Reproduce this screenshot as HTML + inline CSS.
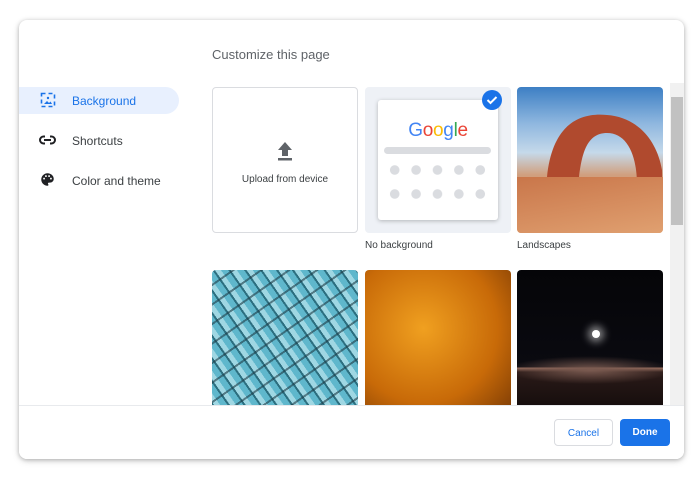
<!DOCTYPE html>
<html><head><style>
*{margin:0;padding:0;box-sizing:border-box}
body{width:700px;height:481px;background:#fff;font-family:"Liberation Sans",sans-serif;position:relative;overflow:hidden}
.dlg{position:absolute;left:19px;top:20px;width:665px;height:439px;border-radius:8px;background:#fff;box-shadow:0 1px 4px rgba(0,0,0,.25),0 2px 8px rgba(0,0,0,.12);overflow:hidden}
.t{position:absolute;font-size:13px;color:#5f6368}
.nav{position:absolute;left:0;width:160px;height:27px;font-size:12px;color:#3c4043}
.nav span{position:absolute;left:53px;top:7px}
.sel{background:#e8f0fe;border-radius:0 14px 14px 0;color:#1a73e8}
.sel span{color:#1a73e8}
.tile{position:absolute;width:146px;height:146px;border-radius:4px;overflow:hidden}
.lab{position:absolute;font-size:10px;color:#3c4043}
.btn{position:absolute;top:399px;height:27px;border-radius:4px;font-size:10px;font-weight:bold;text-align:center;line-height:27px}
</style></head><body>
<div class="dlg">
<div class="t" style="left:193px;top:27px">Customize this page</div>
<div class="nav sel" style="top:67px">
<svg style="position:absolute;left:21px;top:5px" width="16" height="16" viewBox="0 0 16 16"><rect x="1.5" y="1.5" width="13" height="13" fill="none" stroke="#1a73e8" stroke-width="1.6" stroke-dasharray="4 3"/><path d="M4 12l3-3 2 2 1.5-1.5L12 12z" fill="#1a73e8"/><circle cx="8" cy="6" r="1.2" fill="#1a73e8"/></svg>
<span>Background</span></div>
<div class="nav" style="top:107px">
<svg style="position:absolute;left:20px;top:8px" width="17" height="10" viewBox="0 0 17 10"><path d="M6 1.5H4.5a3.5 3.5 0 000 7H6M11 1.5h1.5a3.5 3.5 0 010 7H11M5 5h7" fill="none" stroke="#202124" stroke-width="2"/></svg>
<span>Shortcuts</span></div>
<div class="nav" style="top:147px">
<svg style="position:absolute;left:21px;top:5px" width="15" height="15" viewBox="0 0 24 24"><path d="M12 2C6.5 2 2 6.5 2 12s4.5 10 10 10c.9 0 1.5-.7 1.5-1.5 0-.4-.1-.7-.4-1-.2-.3-.4-.6-.4-1 0-.8.7-1.5 1.5-1.5H16c3.3 0 6-2.7 6-6C22 6 17.5 2 12 2zM6.5 12a1.5 1.5 0 110-3 1.5 1.5 0 010 3zm3-4a1.5 1.5 0 110-3 1.5 1.5 0 010 3zm5 0a1.5 1.5 0 110-3 1.5 1.5 0 010 3zm3 4a1.5 1.5 0 110-3 1.5 1.5 0 010 3z" fill="#202124"/></svg>
<span>Color and theme</span></div>

<div class="tile" style="left:193px;top:67px;border:1px solid #dadce0">
<svg style="position:absolute;left:63px;top:53px" width="18" height="20" viewBox="0 0 18 20"><path d="M9 1L2 9h4v6h6V9h4z" fill="#5f6368"/><rect x="2" y="17" width="14" height="2.5" fill="#5f6368"/></svg>
<div style="position:absolute;top:86px;width:100%;text-align:center;font-size:10px;color:#3c4043">Upload from device</div></div>

<div class="tile" style="left:346px;top:67px;background:#eef1f6">
<div style="position:absolute;left:13px;top:13px;width:120px;height:120px;background:#fff;border-radius:3px;box-shadow:0 1px 4px rgba(0,0,0,.25)">
<div style="position:absolute;top:20px;width:100%;text-align:center;font-size:19px;letter-spacing:-.3px"><span style="color:#4285f4">G</span><span style="color:#ea4335">o</span><span style="color:#fbbc05">o</span><span style="color:#4285f4">g</span><span style="color:#34a853">l</span><span style="color:#ea4335">e</span></div>
<div style="position:absolute;left:6px;top:47px;width:107px;height:7px;border-radius:4px;background:#dadce0"></div>
<div style="position:absolute;left:6px;top:65px;width:107px;height:10px;background:radial-gradient(circle,#dadce0 4.5px,transparent 5px) 0 0/21.4px 10px"></div>
<div style="position:absolute;left:6px;top:89px;width:107px;height:10px;background:radial-gradient(circle,#dadce0 4.5px,transparent 5px) 0 0/21.4px 10px"></div>
</div>
<svg style="position:absolute;left:117px;top:3px" width="20" height="20" viewBox="0 0 20 20"><circle cx="10" cy="10" r="10" fill="#1a73e8"/><path d="M5.5 10l3 3 6-6" fill="none" stroke="#fff" stroke-width="2"/></svg>
</div>
<div class="lab" style="left:346px;top:220px">No background</div>

<div class="tile" style="left:498px;top:67px;background:linear-gradient(180deg,#3d7fc4 0%,#8fb7df 25%,#c5d9ea 45%,#d0a080 60%,#d8875a 75%,#e0a070 100%)">
<svg style="position:absolute;left:0;top:0" width="146" height="146" viewBox="0 0 146 146"><path d="M30 90C35 40 60 25 90 28c30 2 50 25 55 55v15H120c0-30-10-52-30-52-20 0-25 20-28 44z" fill="#b04a2e"/></svg>
<div style="position:absolute;left:0;top:90px;width:146px;height:56px;background:linear-gradient(170deg,#c9764a,#e0a070)"></div>
</div>
<div class="lab" style="left:498px;top:220px">Landscapes</div>

<div class="tile" style="left:193px;top:250px;background:repeating-linear-gradient(55deg,#5fb7cc 0 6px,#2c6f80 6px 8px,#9fd7e3 8px 13px),#5fb7cc"><div style="position:absolute;inset:0;background:repeating-linear-gradient(-35deg,transparent 0 14px,rgba(30,60,70,.6) 14px 16px)"></div></div>
<div class="tile" style="left:346px;top:250px;background:radial-gradient(circle at 40% 40%,#f0a020,#c86a08 60%,#7a3a05)"></div>
<div class="tile" style="left:498px;top:250px;background:radial-gradient(ellipse 120px 20px at 50% 100px,#7a5a50 0,transparent 70%),linear-gradient(#050508 0,#0a0a10 97px,#9a7060 98px,#2a1a18 102px,#100a0a 146px)"><div style="position:absolute;left:75px;top:60px;width:8px;height:8px;border-radius:50%;background:#fff;box-shadow:0 0 8px 4px rgba(255,255,255,.5)"></div></div>

<div style="position:absolute;left:651px;top:63px;width:14px;height:322px;background:#f1f1f1"></div>
<div style="position:absolute;left:652px;top:77px;width:12px;height:128px;background:#c1c1c1"></div>
<div style="position:absolute;left:0;top:385px;width:665px;height:54px;background:#fff;border-top:1px solid #e8eaed"></div>
<div class="btn" style="left:535px;width:59px;border:1px solid #dadce0;color:#1a73e8;font-weight:normal">Cancel</div>
<div class="btn" style="left:601px;width:50px;background:#1a73e8;color:#fff">Done</div>
</div>
</body></html>
